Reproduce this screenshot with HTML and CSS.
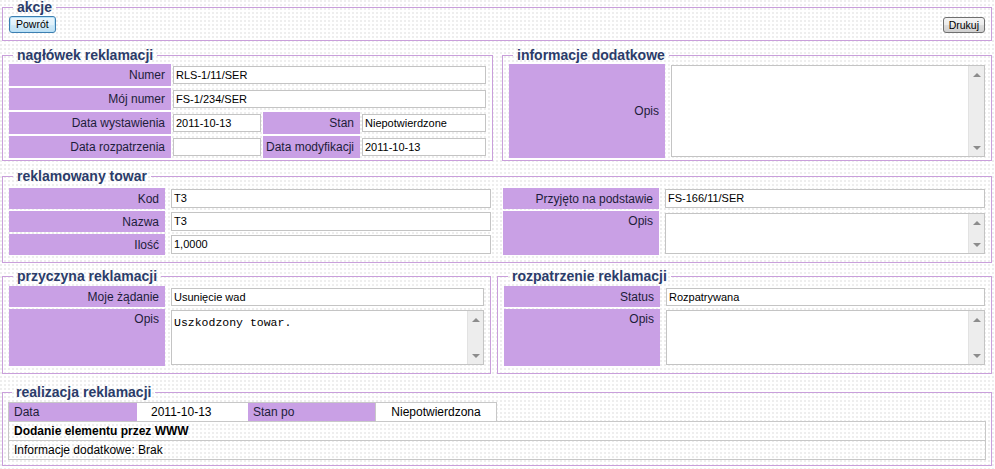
FILE: index.html
```html
<!DOCTYPE html>
<html lang="pl">
  <head>
    <meta charset="UTF-8" />
    <title>Reklamacja RLS-1/11/SER</title>
    <link rel="stylesheet" href="styles.css">
  </head>
  <body>
    <fieldset class="box akcje">
      <legend>akcje</legend>
      <div class="actions">
        <button class="btn btn-default">Powrót</button>
        <button class="btn">Drukuj</button>
      </div>
    </fieldset>

    <div class="pair pair-top">
      <fieldset class="box naglowek">
        <legend>nagłówek reklamacji</legend>
        <div class="head-grid">
          <div class="lbl">Numer</div>
          <div class="val span3"><div class="inp">RLS-1/11/SER</div></div>
          <div class="lbl">Mój numer</div>
          <div class="val span3"><div class="inp">FS-1/234/SER</div></div>
          <div class="lbl">Data wystawienia</div>
          <div class="val"><div class="inp">2011-10-13</div></div>
          <div class="lbl">Stan</div>
          <div class="val"><div class="inp">Niepotwierdzone</div></div>
          <div class="lbl">Data rozpatrzenia</div>
          <div class="val"><div class="inp"></div></div>
          <div class="lbl">Data modyfikacji</div>
          <div class="val"><div class="inp">2011-10-13</div></div>
        </div>
      </fieldset>

      <fieldset class="box info">
        <legend>informacje dodatkowe</legend>
        <div class="info-grid">
          <div class="lbl">Opis</div>
          <div class="val">
            <div class="area">
              <div class="area-text"></div>
              <div class="scroll"><span class="arr-up"></span><span class="arr-down"></span></div>
            </div>
          </div>
        </div>
      </fieldset>
    </div>

    <fieldset class="box towar">
      <legend>reklamowany towar</legend>
      <div class="two-col">
        <div class="rows rows-left">
          <div class="lbl">Kod</div>
          <div class="val"><div class="inp inp-tall">T3</div></div>
          <div class="lbl">Nazwa</div>
          <div class="val"><div class="inp inp-tall">T3</div></div>
          <div class="lbl">Ilość</div>
          <div class="val"><div class="inp inp-tall">1,0000</div></div>
        </div>
        <div class="rows rows-right">
          <div class="lbl">Przyjęto na podstawie</div>
          <div class="val"><div class="inp inp-tall">FS-166/11/SER</div></div>
          <div class="lbl lbl-top">Opis</div>
          <div class="val">
            <div class="area area-small">
              <div class="area-text"></div>
              <div class="scroll"><span class="arr-up"></span><span class="arr-down"></span></div>
            </div>
          </div>
        </div>
      </div>
    </fieldset>

    <div class="pair pair-bottom">
      <fieldset class="box przyczyna">
        <legend>przyczyna reklamacji</legend>
        <div class="rows rows-reason">
          <div class="lbl">Moje żądanie</div>
          <div class="val"><div class="inp">Usunięcie wad</div></div>
          <div class="lbl lbl-top">Opis</div>
          <div class="val">
            <div class="area area-mid">
              <div class="area-text mono">Uszkodzony towar.</div>
              <div class="scroll"><span class="arr-up"></span><span class="arr-down"></span></div>
            </div>
          </div>
        </div>
      </fieldset>

      <fieldset class="box rozpatrzenie">
        <legend>rozpatrzenie reklamacji</legend>
        <div class="rows rows-reason">
          <div class="lbl">Status</div>
          <div class="val"><div class="inp">Rozpatrywana</div></div>
          <div class="lbl lbl-top">Opis</div>
          <div class="val">
            <div class="area area-mid">
              <div class="area-text"></div>
              <div class="scroll"><span class="arr-up"></span><span class="arr-down"></span></div>
            </div>
          </div>
        </div>
      </fieldset>
    </div>

    <fieldset class="box realizacja">
      <legend>realizacja reklamacji</legend>
      <div class="real-head">
        <div class="rh-lbl">Data</div>
        <div class="rh-val">2011-10-13</div>
        <div class="rh-lbl">Stan po</div>
        <div class="rh-val rh-center">Niepotwierdzona</div>
      </div>
      <div class="real-row real-bold">Dodanie elementu przez WWW</div>
      <div class="real-row real-last">Informacje dodatkowe: Brak</div>
    </fieldset>
  </body>
</html>
```

FILE: styles.css
```css
body {
  margin: 0;
  padding: 0 3px 0 2px;
  font-family: "Liberation Sans", Arial, sans-serif;
  font-size: 12px;
  color: #1d1d3a;
  background-color: #fff;
  background-image: linear-gradient(90deg, transparent 2px, #fff 2px),
    linear-gradient(#eeeeee 2px, transparent 2px);
  background-size: 4px 4px;
}

/* fieldsets */
.box {
  margin: 0;
  min-width: 0;
  border: 1px solid #c99fdb;
  padding: 2px 6px 2px 6px;
}
.box legend {
  margin-left: 4px;
  padding: 0 4px;
  font-size: 14px;
  line-height: 14px;
  font-weight: bold;
  color: #2b3c6a;
}

.akcje {
  padding: 2px 6px 7px 6px;
}
.actions {
  display: flex;
  justify-content: space-between;
  align-items: flex-end;
  height: 17px;
}
.btn {
  font-family: "Liberation Sans", Arial, sans-serif;
  font-size: 10.5px;
  color: #000;
  height: 16px;
  line-height: 13px;
  padding: 0 5px;
  border: 1px solid #707070;
  border-radius: 3px;
  background: linear-gradient(#f4f4f4 0%, #ebebeb 50%, #dddddd 50%, #d0d0d0 100%);
}
.btn-default {
  height: 17px;
  padding: 0 6px;
  border-color: #3c7fb1;
  box-shadow: inset 0 0 0 1px #b8e1f7;
  background: linear-gradient(#eaf6fd 0%, #e0f1fb 50%, #cfe9f8 50%, #bfe0f3 100%);
}

.pair {
  display: grid;
  margin-top: 7px;
}
.pair-top {
  grid-template-columns: 491px 1fr;
  column-gap: 9px;
}
.pair-bottom {
  grid-template-columns: 489px 1fr;
  column-gap: 6px;
  margin-top: 6px;
}

/* labels and fields */
.lbl {
  background: #c9a0e5;
  display: flex;
  align-items: center;
  justify-content: flex-end;
  padding-right: 6px;
  white-space: nowrap;
}
.lbl-top {
  align-items: flex-start;
  padding-top: 3px;
}
.val {
  display: flex;
  align-items: center;
  min-width: 0;
}
.inp {
  flex: 1;
  box-sizing: border-box;
  height: 18px;
  border: 1px solid #c4c4c4;
  background: #fff;
  padding: 0 2px;
  line-height: 16px;
  font-size: 11px;
  color: #000;
  white-space: nowrap;
  overflow: hidden;
}
.inp-tall {
  height: 19px;
  line-height: 17px;
}

.head-grid {
  display: grid;
  grid-template-columns: 162px 88px 97px 1fr;
  grid-auto-rows: 22px;
  gap: 2px;
}
.span3 {
  grid-column: span 3;
}

.info-grid {
  display: grid;
  grid-template-columns: 156px 1fr;
  column-gap: 6px;
  height: 94px;
}

/* textarea with its scrollbar */
.area {
  flex: 1;
  align-self: stretch;
  display: flex;
  margin: 1px 0;
  border: 1px solid #c4c4c4;
  background: #fff;
}
.area-small {
  align-self: center;
  height: 39px;
  margin: 0;
}
.area-mid {
  align-self: center;
  height: 53px;
  margin: 0;
}
.area-text {
  flex: 1;
  padding: 3px 2px;
  color: #000;
}
.mono {
  font-family: "Liberation Mono", "Courier New", monospace;
  font-size: 11.5px;
  padding-top: 5px;
}
.scroll {
  width: 15px;
  background: #ededed;
  border-left: 1px solid #e2e2e2;
  display: flex;
  flex-direction: column;
  justify-content: space-between;
  align-items: center;
  padding: 7px 0 6px;
}
.arr-up {
  width: 0;
  height: 0;
  border-left: 4px solid transparent;
  border-right: 4px solid transparent;
  border-bottom: 4px solid #8c8c8c;
}
.arr-down {
  width: 0;
  height: 0;
  border-left: 4px solid transparent;
  border-right: 4px solid transparent;
  border-top: 4px solid #8c8c8c;
}

/* reklamowany towar */
.towar {
  margin-top: 8px;
  padding: 5px 6px 7px 6px;
}
.two-col {
  display: grid;
  grid-template-columns: 1fr 1fr;
  column-gap: 12px;
}
.rows {
  display: grid;
  grid-template-columns: 156px 1fr;
  column-gap: 6px;
  row-gap: 2px;
  grid-auto-rows: 21px;
}
.rows-right {
  grid-template-rows: 21px 44px;
}

/* przyczyna / rozpatrzenie */
.przyczyna,
.rozpatrzenie {
  padding: 3px 6px 7px 6px;
}
.rows-reason {
  grid-template-rows: 21px 57px;
}

/* realizacja */
.realizacja {
  margin-top: 11px;
  padding: 3px 5px 5px 5px;
}
.real-head {
  display: grid;
  grid-template-columns: 128px 111px 127px 121px;
  width: 489px;
  box-sizing: border-box;
  height: 19px;
  border: 1px solid #c8c8c8;
  border-bottom: none;
}
.rh-lbl {
  background: #c9a0e5;
  padding-left: 5px;
  line-height: 18px;
}
.rh-val {
  background: #fff;
  padding-left: 14px;
  line-height: 18px;
  color: #000;
}
.rh-center {
  padding-left: 0;
  text-align: center;
  border-left: 1px solid #c8c8c8;
}
.real-row {
  height: 18px;
  line-height: 18px;
  border: 1px solid #c8c8c8;
  border-bottom: none;
  padding-left: 5px;
  color: #000;
}
.real-bold {
  font-weight: bold;
}
.real-last {
  border-bottom: 1px solid #c8c8c8;
}
```
